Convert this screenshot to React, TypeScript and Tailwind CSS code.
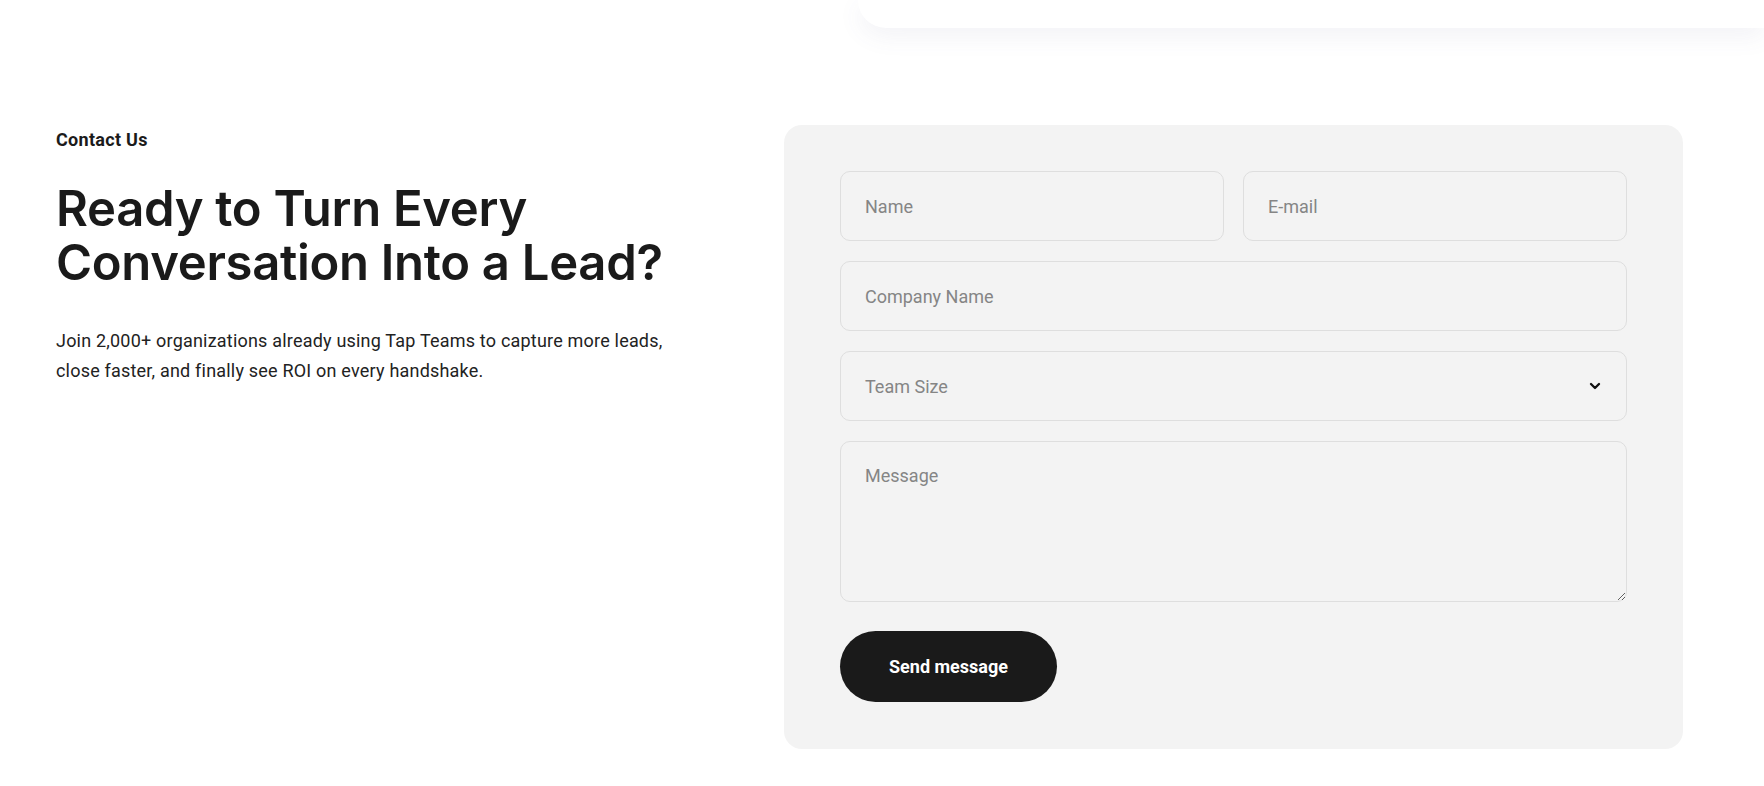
import { ChevronDown } from "lucide-react";

const fieldClass =
    "w-full h-[70px] rounded-[10px] border border-[#dedede] bg-[#f3f3f3] px-[24px] text-[18px] text-[#222] placeholder:text-[#858585] outline-none";

export default function App() {
    return (
        <div className="min-h-[786px] bg-white font-['Roboto',sans-serif] text-[#1b1b1b]">
            {/* tail of the previous section's card */}
            <div className="ml-[858px] h-[28px] rounded-bl-[28px] bg-white shadow-[0_8px_24px_rgba(90,90,140,0.08)]" />

            <section className="flex items-start pl-[56px] pt-[97px]">
                <div className="w-[728px] shrink-0 pt-[2px]">
                    <p className="text-[18px] font-bold leading-[26px] tracking-[0.3px]">Contact Us</p>
                    <h2 className="mt-[29px] font-['Inter',sans-serif] text-[49px] font-semibold leading-[54px] tracking-[-0.3px] text-[#1a1a1a]">
                        Ready to Turn Every
                        <br />
                        Conversation Into a Lead?
                    </h2>
                    <p className="mt-[36px] text-[18px] leading-[30px] tracking-[0.2px] text-[#222]">
                        Join 2,000+ organizations already using Tap Teams to capture more leads,
                        <br />
                        close faster, and finally see ROI on every handshake.
                    </p>
                </div>

                <form className="w-[899px] shrink-0 rounded-[18px] bg-[#f3f3f3] px-[56px] pt-[46px] pb-[47px]">
                    <div className="flex flex-col gap-[20px]">
                        <div className="grid grid-cols-2 gap-[19px]">
                            <input className={fieldClass} placeholder="Name" />
                            <input className={fieldClass} placeholder="E-mail" />
                        </div>
                        <input className={fieldClass} placeholder="Company Name" />
                        <div className="relative">
                            <div className={`${fieldClass} flex items-center text-[#858585]`}>Team Size</div>
                            <ChevronDown
                                className="absolute right-[24px] top-1/2 h-[16px] w-[16px] -translate-y-1/2 text-[#111]"
                                strokeWidth={3.5}
                            />
                        </div>
                        <textarea
                            className="block w-full h-[161px] rounded-[10px] border border-[#dedede] bg-[#f3f3f3] px-[24px] py-[20px] text-[18px] text-[#222] placeholder:text-[#858585] outline-none"
                            placeholder="Message"
                        />
                    </div>
                    <button
                        type="button"
                        className="mt-[29px] h-[71px] w-[217px] rounded-full bg-[#1a1a1a] text-[18px] font-bold text-white"
                    >
                        Send message
                    </button>
                </form>
            </section>
        </div>
    );
}
